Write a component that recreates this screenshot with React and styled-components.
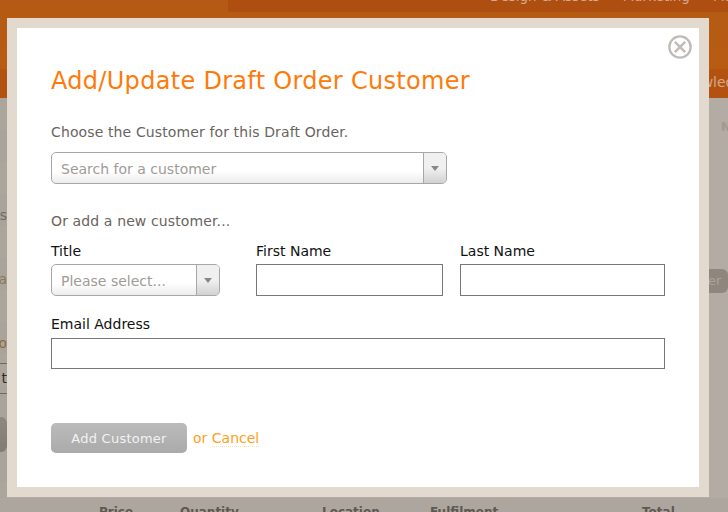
import styled, { createGlobalStyle } from "styled-components";

const GlobalStyle = createGlobalStyle`
  html, body {
    margin: 0;
    padding: 0;
    background: #b3aca4;
  }
  * {
    box-sizing: border-box;
  }
`;

const Page = styled.div`
  position: relative;
  width: 728px;
  height: 512px;
  overflow: hidden;
  display: flex;
  flex-direction: column;
  background: #b3aca4;
  font-family: "DejaVu Sans", Verdana, sans-serif;
`;

const Header = styled.header`
  height: 98px;
  flex: none;
  background: linear-gradient(#b55a14 0, #b85c14 68px, #b35210 70px, #b35210 98px);
`;

const Nav = styled.nav`
  height: 12px;
  margin-left: 228px;
  padding-left: 262px;
  display: flex;
  align-items: flex-end;
  gap: 23px;
  overflow: hidden;
  background: #ae4f11;
  color: #d3ab8c;
  font-size: 13.5px;
  line-height: 18px;
  white-space: nowrap;
`;

const NavItem = styled.span`
  margin-bottom: 7px;
  flex: none;
`;

const SubNav = styled.div`
  height: 86px;
  display: flex;
  justify-content: flex-end;
  padding-top: 61px;
  overflow: hidden;
  color: #d3a888;
  font-size: 14px;
  line-height: 18px;
`;

const SubNavItem = styled.span`
  flex: none;
  margin-right: -24px;
`;

const Body = styled.main`
  flex: 1;
  display: flex;
  justify-content: space-between;
  overflow: hidden;
`;

const LeftEdge = styled.div`
  width: 7px;
  display: flex;
  flex-direction: column;
  align-items: flex-end;
  overflow: hidden;
  font-size: 14px;
  line-height: 18px;
  background: repeating-linear-gradient(#aca59c 0, #aca59c 32px, #a9a39c 32px, #a9a39c 64px);
`;

const EdgeText = styled.span`
  margin-top: ${(p) => p.$top}px;
  width: 7px;
  flex: none;
  overflow: hidden;
  direction: rtl;
  color: ${(p) => p.$color};
`;

const EdgeRow = styled.div`
  margin-top: 11px;
  width: 7px;
  height: 31px;
  flex: none;
  border-top: 1px solid #6f6a64;
  border-bottom: 1px solid #6f6a64;
  color: #2f2b27;
  font-size: 14px;
  line-height: 29px;
  overflow: hidden;
  direction: rtl;
`;

const EdgeButton = styled.div`
  margin-top: 23px;
  width: 7px;
  height: 35px;
  flex: none;
  border-radius: 0 6px 6px 0;
  background: linear-gradient(#8e8880, #817b74);
`;

const RightEdge = styled.div`
  width: 19px;
  display: flex;
  flex-direction: column;
  overflow: hidden;
  font-size: 12px;
  line-height: 16px;
`;

const RightLetter = styled.span`
  margin: 21px 0 0 12px;
  color: #a09991;
  font-weight: 700;
`;

const RightButton = styled.div`
  margin-top: 134px;
  height: 24px;
  border-radius: 0 6px 6px 0;
  background: #8f877e;
  color: #aaa39b;
  font-size: 13px;
  line-height: 24px;
  text-indent: -1px;
`;

const TableHead = styled.div`
  height: 14px;
  flex: none;
  display: flex;
  background: #aca69e;
  color: #5e5850;
  font-size: 12px;
  font-weight: 700;
  line-height: 16px;
  overflow: hidden;
`;

const TableCell = styled.span`
  flex: none;
  width: ${(p) => p.$width}px;
  margin-top: 6px;
  white-space: nowrap;
`;

const Dialog = styled.section`
  position: absolute;
  top: 18px;
  left: 7px;
  width: 702px;
  height: 479px;
  border: 10px solid #e2dacf;
  background: #fff;
  padding: 38px 34px 0;
`;

const CloseButton = styled.button`
  position: absolute;
  top: 7px;
  right: 7px;
  width: 24px;
  height: 24px;
  padding: 0;
  border: 0;
  background: none;
  display: block;
`;

const Title = styled.h1`
  margin: 0;
  color: #ff7a09;
  font-size: 24px;
  font-weight: 400;
  line-height: 30px;
  letter-spacing: 0.3px;
`;

const Hint = styled.p`
  margin: ${(p) => p.$top}px 0 0;
  color: #6a645e;
  font-size: 14px;
  line-height: 18px;
  letter-spacing: 0.12px;
`;

const SelectBox = styled.div`
  margin-top: ${(p) => p.$top || 0}px;
  width: ${(p) => p.$width}px;
  height: 32px;
  display: flex;
  border: 1px solid #aaa7a3;
  border-radius: 5px;
  background: linear-gradient(#fff 60%, #ececec);
  overflow: hidden;
`;

const SelectText = styled.span`
  flex: 1;
  padding-left: 9px;
  color: #a09b96;
  font-size: 14px;
  line-height: 33px;
  white-space: nowrap;
`;

const SelectArrow = styled.span`
  flex: none;
  width: 23px;
  display: flex;
  align-items: center;
  justify-content: center;
  border-left: 1px solid #aaa7a3;
  background: linear-gradient(#f0f0f0 50%, #d2d2d2);

  &::after {
    content: "";
    border-top: 5px solid #888;
    border-left: 4px solid transparent;
    border-right: 4px solid transparent;
  }
`;

const Row = styled.div`
  margin-top: ${(p) => p.$top || 0}px;
  display: flex;
  gap: 17px;
`;

const Field = styled.div`
  flex: none;
  width: ${(p) => p.$width}px;
`;

const Label = styled.label`
  display: block;
  height: ${(p) => p.$height || 21}px;
  color: #111;
  font-size: 14px;
  line-height: 17px;
`;

const TextInput = styled.input`
  display: block;
  width: 100%;
  height: ${(p) => p.$height || 32}px;
  margin: 0;
  border: 1px solid #777;
  border-radius: 0;
  background: #fff;
  outline: 0;
`;

const Actions = styled.div`
  margin-top: 54px;
  display: flex;
  align-items: center;
  gap: 6px;
`;

const SubmitButton = styled.button`
  width: 136px;
  height: 30px;
  padding: 0;
  border: 0;
  border-radius: 5px;
  background: linear-gradient(#bbb, #aaa);
  color: #f2f2f2;
  font-family: inherit;
  font-size: 13px;
  letter-spacing: 0.25px;
`;

const CancelText = styled.span`
  color: #ff9f19;
  font-size: 14px;
`;

const CancelLink = styled.a`
  color: inherit;
  border-bottom: 1px dotted #ffdca8;
`;

const CloseIcon = () => (
  <svg width="24" height="24" viewBox="0 0 24 24" fill="none" stroke="#c0bbb5" strokeWidth="2.4">
    <circle cx="12" cy="12" r="10.6" />
    <path d="M6.8 6.8l10.4 10.4M17.2 6.8L6.8 17.2" />
  </svg>
);

function App() {
  return (
    <Page>
      <GlobalStyle />
      <Header>
        <Nav>
          <NavItem>Design &amp; Assets</NavItem>
          <NavItem>Marketing</NavItem>
          <NavItem>Manage</NavItem>
        </Nav>
        <SubNav>
          <SubNavItem>Knowledge</SubNavItem>
        </SubNav>
      </Header>
      <Body>
        <LeftEdge>
          <EdgeText $top={108} $color="#6f6a62">s</EdgeText>
          <EdgeText $top={46} $color="#8c7a58">a</EdgeText>
          <EdgeText $top={46} $color="#8f6a35">o</EdgeText>
          <EdgeRow>t</EdgeRow>
          <EdgeButton />
        </LeftEdge>
        <RightEdge>
          <RightLetter>N</RightLetter>
          <RightButton>er</RightButton>
        </RightEdge>
      </Body>
      <TableHead>
        <TableCell $width={99} />
        <TableCell $width={81}>Price</TableCell>
        <TableCell $width={142}>Quantity</TableCell>
        <TableCell $width={108}>Location</TableCell>
        <TableCell $width={212}>Fulfilment</TableCell>
        <TableCell $width={60}>Total</TableCell>
      </TableHead>

      <Dialog>
        <CloseButton aria-label="Close">
          <CloseIcon />
        </CloseButton>
        <Title>Add/Update Draft Order Customer</Title>
        <Hint $top={27}>Choose the Customer for this Draft Order.</Hint>
        <SelectBox $top={11} $width={396}>
          <SelectText>Search for a customer</SelectText>
          <SelectArrow />
        </SelectBox>
        <Hint $top={28}>Or add a new customer...</Hint>
        <Row $top={13}>
          <Field $width={188}>
            <Label>Title</Label>
            <SelectBox $width={169}>
              <SelectText>Please select...</SelectText>
              <SelectArrow />
            </SelectBox>
          </Field>
          <Field $width={187}>
            <Label>First Name</Label>
            <TextInput />
          </Field>
          <Field $width={205}>
            <Label>Last Name</Label>
            <TextInput />
          </Field>
        </Row>
        <Row $top={20}>
          <Field $width={614}>
            <Label $height={22}>Email Address</Label>
            <TextInput $height={31} />
          </Field>
        </Row>
        <Actions>
          <SubmitButton>Add Customer</SubmitButton>
          <CancelText>
            or <CancelLink>Cancel</CancelLink>
          </CancelText>
        </Actions>
      </Dialog>
    </Page>
  );
}

export default App;
